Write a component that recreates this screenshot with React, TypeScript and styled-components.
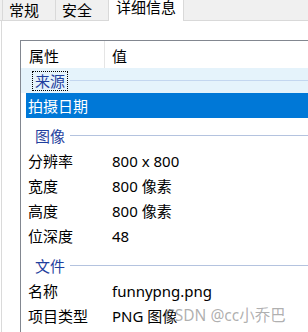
import React from "react";
import styled, { createGlobalStyle } from "styled-components";

const Global = createGlobalStyle`
  html, body { margin: 0; padding: 0; background: #ffffff; overflow: hidden; }
  body { font-family: "Noto Sans", "Noto Sans CJK SC", sans-serif; font-size: 15px; color: #000; }
  * { box-sizing: border-box; }
`;

const Page = styled.div`
  position: relative;
  width: 308px;
  height: 332px;
  overflow: hidden;
  background: #fff;
`;

const TabStrip = styled.div`
  display: flex;
  align-items: flex-end;
  height: 21px;
  padding-left: 2px;
  background: #f0f0f0;
  border-bottom: 1px solid #d9d9d9;
`;

const Tab = styled.div<{ $active?: boolean; $first?: boolean; $w: number }>`
  width: ${(p) => p.$w}px;
  height: ${(p) => (p.$active ? 23 : 20)}px;
  margin-bottom: ${(p) => (p.$active ? -1 : 0)}px;
  display: flex;
  align-items: ${(p) => (p.$active ? "flex-start" : "center")};
  padding-left: ${(p) => (p.$active ? 7 : 6)}px;
  padding-top: ${(p) => (p.$active ? 0 : 0)}px;
  line-height: 18px;
  background: ${(p) => (p.$active ? "#ffffff" : "#f0f0f0")};
  border-right: 1px solid #d9d9d9;
  border-left: ${(p) => (p.$first || p.$active ? "1px solid #d9d9d9" : "none")};
  margin-left: ${(p) => (p.$active ? -1 : 0)}px;
  white-space: nowrap;
  position: relative;
  z-index: ${(p) => (p.$active ? 1 : 0)};
`;

const Pane = styled.div`
  margin-left: 1px;
  border-left: 1px solid #dadada;
  padding: 19px 0 0 18px;
  height: 311px;
`;

const ListView = styled.div`
  border-top: 1px solid #828790;
  border-left: 1px solid #828790;
  height: 100%;
`;

const Header = styled.div`
  display: flex;
  height: 27px;
  align-items: stretch;
`;

const HeaderCell = styled.div<{ $w?: number; $pl: number; $sep?: boolean }>`
  ${(p) => (p.$w ? `width: ${p.$w}px;` : "flex: 1;")}
  padding-left: ${(p) => p.$pl}px;
  display: flex;
  align-items: center;
  padding-top: 2px;
  border-right: ${(p) => (p.$sep ? "1px solid #e5e5e5" : "none")};
`;

const Body = styled.div`
  padding-left: 5px;
`;

const GroupRow = styled.div<{ $first?: boolean }>`
  display: flex;
  align-items: center;
  height: ${(p) => (p.$first ? 25 : 30)}px;
  padding-top: ${(p) => (p.$first ? 0 : 5)}px;
  padding-left: 6px;
  margin-left: ${(p) => (p.$first ? -5 : 0)}px;
  padding-left: ${(p) => (p.$first ? 11 : 6)}px;
  background: ${(p) => (p.$first ? "#e5f3fb" : "transparent")};
  color: #1f3f9e;
`;

const GroupLabel = styled.span<{ $focus?: boolean }>`
  display: inline-flex;
  align-items: center;
  height: 20px;
  padding: 0 2px;
  border: 1px dotted ${(p) => (p.$focus ? "#000" : "transparent")};
  line-height: 18px;
`;

const GroupLine = styled.div<{ $first?: boolean }>`
  flex: 1;
  height: 1px;
  margin-left: 2px;
  background: ${(p) => (p.$first ? "#c3d6ef" : "#b4c3df")};
`;

const Row = styled.div<{ $selected?: boolean }>`
  display: flex;
  align-items: center;
  height: 25px;
  padding-left: 2px;
  background: ${(p) => (p.$selected ? "#0078d7" : "transparent")};
  color: ${(p) => (p.$selected ? "#ffffff" : "#000000")};
  white-space: nowrap;
  line-height: 18px;
`;

const Label = styled.span`
  width: 84px;
  flex-shrink: 0;
`;

const Value = styled.span``;

const Watermark = styled.span`
  position: absolute;
  left: 165px;
  top: 305px;
  font-size: 15.5px;
  line-height: 20px;
  color: rgba(150, 150, 150, 0.75);
  white-space: nowrap;
`;

type Item =
  | { kind: "group"; title: string; first?: boolean; focus?: boolean }
  | { kind: "row"; label: string; value?: string; selected?: boolean };

const items: Item[] = [
  { kind: "group", title: "来源", first: true, focus: true },
  { kind: "row", label: "拍摄日期", selected: true },
  { kind: "group", title: "图像" },
  { kind: "row", label: "分辨率", value: "800 x 800" },
  { kind: "row", label: "宽度", value: "800 像素" },
  { kind: "row", label: "高度", value: "800 像素" },
  { kind: "row", label: "位深度", value: "48" },
  { kind: "group", title: "文件" },
  { kind: "row", label: "名称", value: "funnypng.png" },
  { kind: "row", label: "项目类型", value: "PNG 图像" },
];

export default function App() {
  return (
    <>
      <Global />
      <Page>
        <TabStrip>
          <Tab $first $w={54}>常规</Tab>
          <Tab $w={53}>安全</Tab>
          <Tab $active $w={76}>详细信息</Tab>
        </TabStrip>
        <Pane>
          <ListView>
            <Header>
              <HeaderCell $w={84} $pl={8} $sep>属性</HeaderCell>
              <HeaderCell $pl={7}>值</HeaderCell>
            </Header>
            <Body>
              {items.map((it, i) =>
                it.kind === "group" ? (
                  <GroupRow key={i} $first={it.first}>
                    <GroupLabel $focus={it.focus}>{it.title}</GroupLabel>
                    <GroupLine $first={it.first} />
                  </GroupRow>
                ) : (
                  <Row key={i} $selected={it.selected}>
                    <Label>{it.label}</Label>
                    {it.value && <Value>{it.value}</Value>}
                  </Row>
                )
              )}
            </Body>
          </ListView>
        </Pane>
        <Watermark>CSDN @cc小乔巴</Watermark>
      </Page>
    </>
  );
}
